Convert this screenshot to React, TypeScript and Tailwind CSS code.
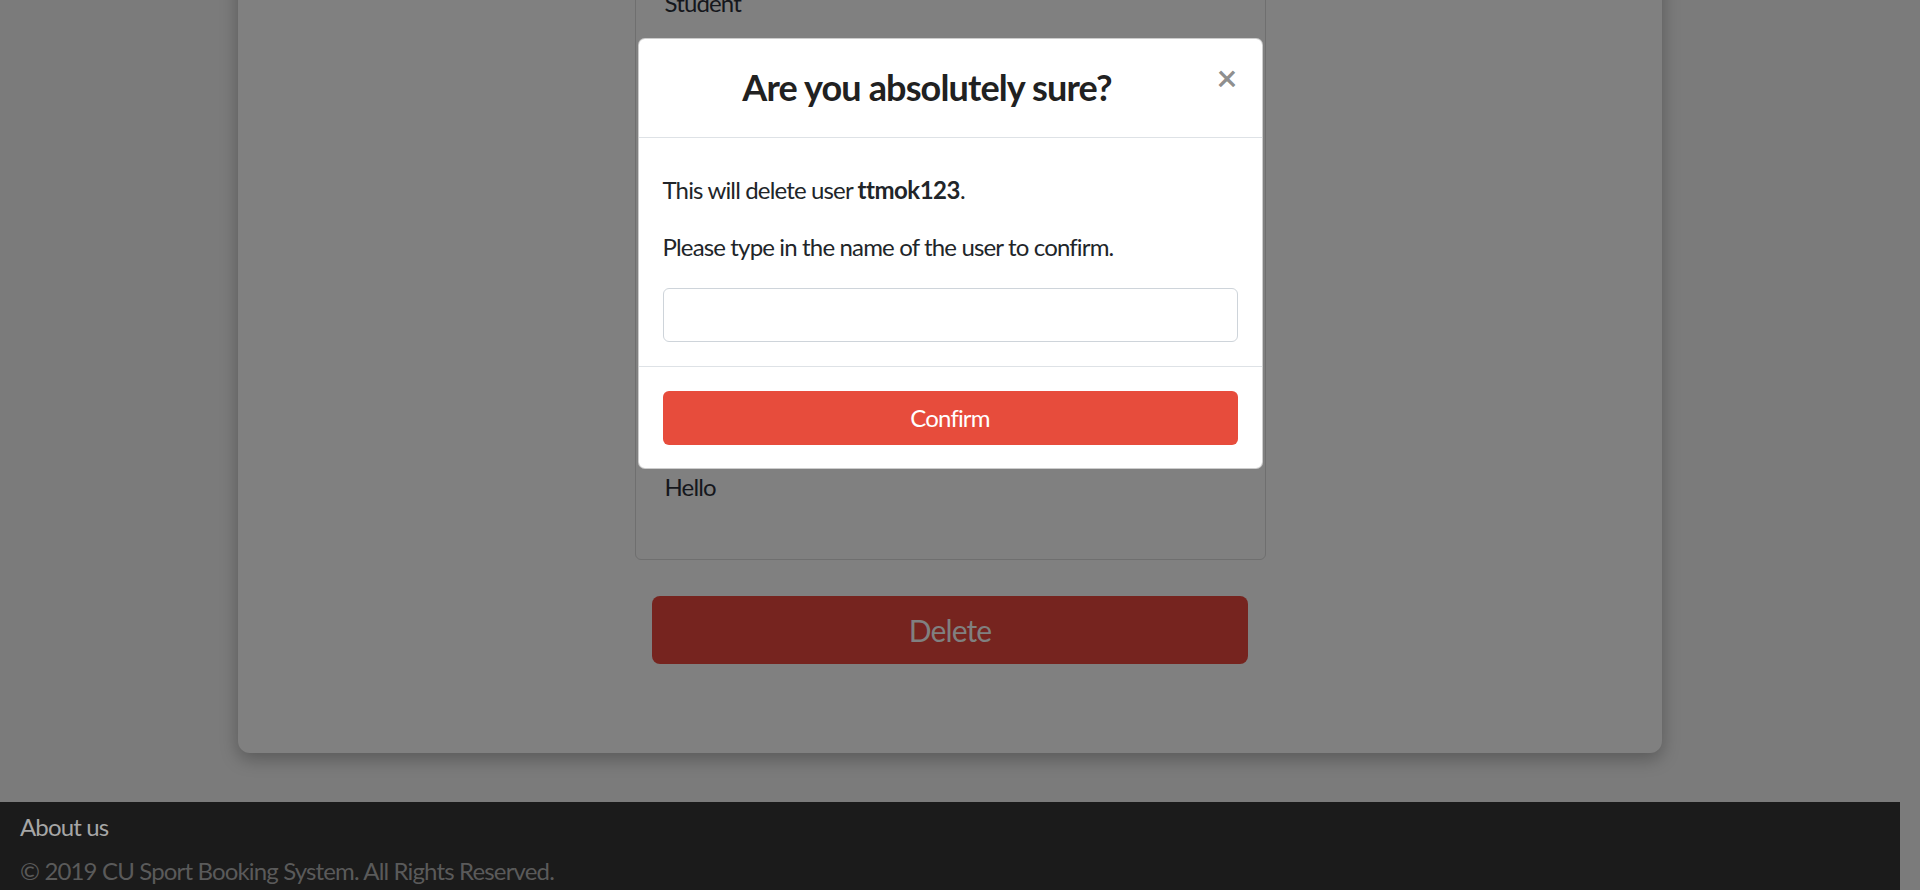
import { useState } from "react";

const USERNAME = "ttmok123";

const DeleteUserPage = () => {
  const [typed, setTyped] = useState("");

  return (
    <div className="relative h-[890px] overflow-hidden bg-[#7b7b7b] font-['Lato','Open_Sans',sans-serif] tracking-[-0.85px]">
      {/* page behind the dimmed backdrop, scrolled down a bit */}
      <div className="w-[1900px] -mt-[140px]">
        <div className="mx-auto mb-[49px] w-[1424px] rounded-[12px] bg-[#808080] pt-[60px] pb-[89px] shadow-[0_6px_18px_rgba(0,0,0,0.28)]">
          <div className="mx-auto w-[631px] rounded-[6px] border border-[#6f6f6f] px-[29px] pt-[64px] pb-[54px] text-[24px] leading-[36px] text-[#15171c]">
            <p>Student</p>
            <div className="h-[448px]" />
            <p>Hello</p>
          </div>
          <div className="mx-auto mt-[36px] flex h-[68px] w-[596px] items-center justify-center rounded-[8px] bg-[#76241f] text-[30px] text-[#808080]">
            Delete
          </div>
        </div>

        <footer className="h-[120px] bg-[#1b1b1b] px-[20px] pt-[7px] text-[24px] leading-[36px]">
          <div className="text-[#a6a6a6]">About us</div>
          <div className="mt-[8px] text-[#5a5a5a]">© 2019 CU Sport Booking System. All Rights Reserved.</div>
        </footer>
      </div>

      {/* modal */}
      <div className="absolute inset-0 flex justify-center pr-[20px] pt-[38px]">
        <div className="h-fit w-[625px] rounded-[7px] border border-black/20 bg-white text-[#212529]">
          <div className="flex h-[99px] items-center border-b border-[#dee2e6] px-[24px]">
            <h4 className="flex-1 text-center text-[36px] font-bold leading-[1.2] text-[#212121]">
              Are you absolutely sure?
            </h4>
            <button className="mr-[1px] w-[45px] pb-[22px] text-right text-[36px] font-bold leading-none text-black/45">
              ×
            </button>
          </div>
          <div className="px-[24px] pt-[34px] pb-[24px] text-[24px] leading-[36px]">
            <p className="mb-[21px]">
              This will delete user <b className="tracking-[-0.5px]">{USERNAME}</b>.
            </p>
            <p className="mb-[23px]">Please type in the name of the user to confirm.</p>
            <input
              value={typed}
              onChange={(e) => setTyped(e.target.value)}
              className="block h-[54px] w-full rounded-[6px] border border-[#ced4da] px-[18px] text-[24px] outline-none"
            />
          </div>
          <div className="border-t border-[#dee2e6] px-[24px] pt-[24px] pb-[23px]">
            <button className="flex h-[54px] w-full items-center justify-center rounded-[6px] bg-[#e74c3c] text-[24px] text-white">
              Confirm
            </button>
          </div>
        </div>
      </div>
    </div>
  );
};

export default DeleteUserPage;
